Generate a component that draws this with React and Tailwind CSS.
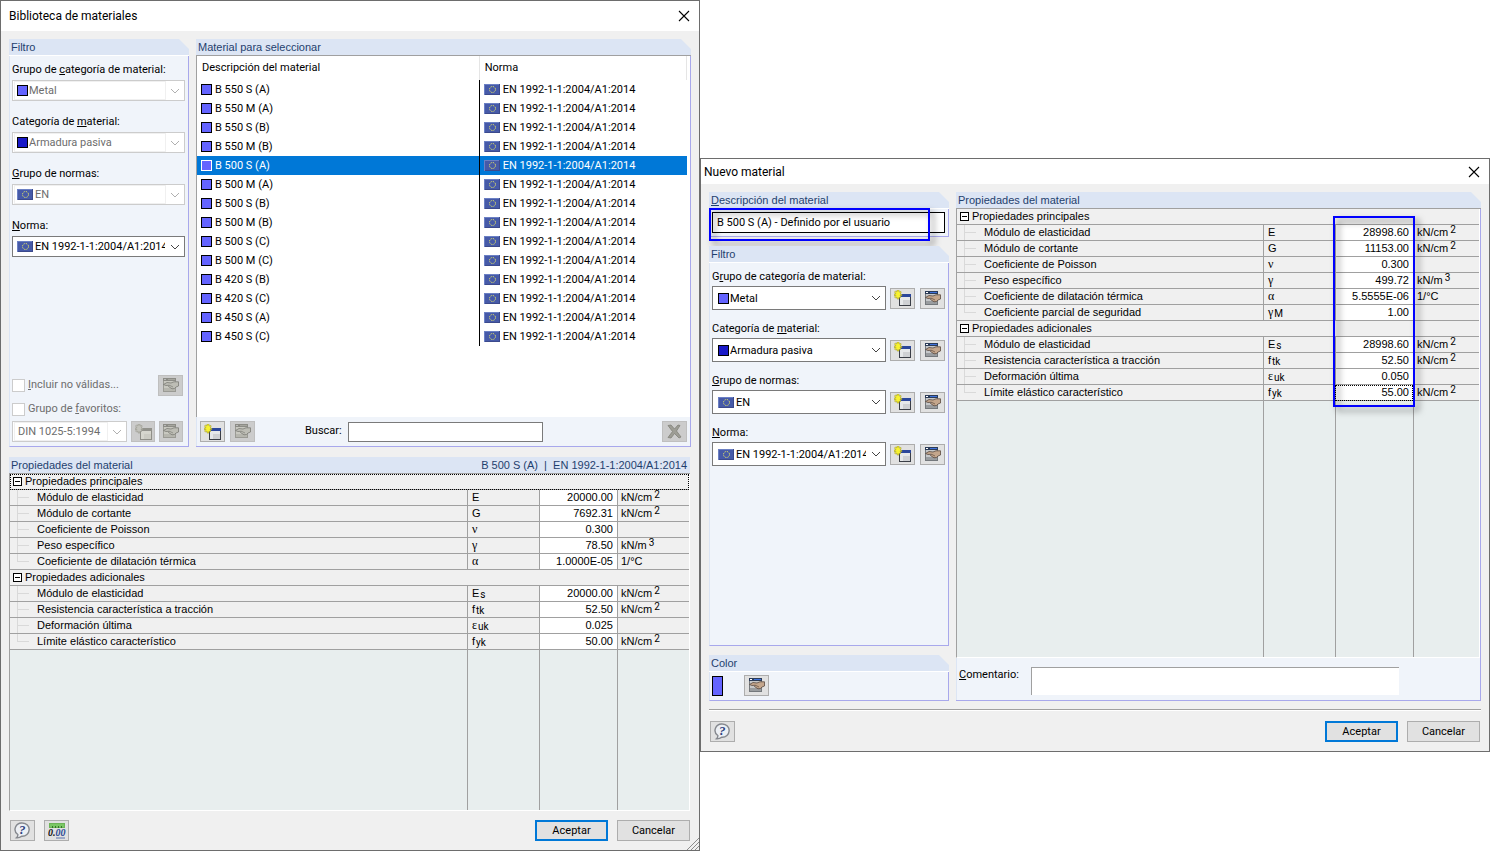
import { useId } from "react";

const uiFont = "font-[Roboto,'Noto_Sans',sans-serif]";
const gridFont = "font-['Liberation_Sans',Arial,sans-serif]";

const materials = [
  "B 550 S (A)",
  "B 550 M (A)",
  "B 550 S (B)",
  "B 550 M (B)",
  "B 500 S (A)",
  "B 500 M (A)",
  "B 500 S (B)",
  "B 500 M (B)",
  "B 500 S (C)",
  "B 500 M (C)",
  "B 420 S (B)",
  "B 420 S (C)",
  "B 450 S (A)",
  "B 450 S (C)",
];

const libraryGroups = [
  {
    title: "Propiedades principales",
    focused: true,
    rows: [
      { name: "Módulo de elasticidad", symbol: "E", value: "20000.00", unit: "kN/cm", power: "2" },
      { name: "Módulo de cortante", symbol: "G", value: "7692.31", unit: "kN/cm", power: "2" },
      { name: "Coeficiente de Poisson", symbol: "ν", greek: true, value: "0.300" },
      { name: "Peso específico", symbol: "γ", greek: true, value: "78.50", unit: "kN/m", power: "3" },
      { name: "Coeficiente de dilatación térmica", symbol: "α", greek: true, value: "1.0000E-05", unit: "1/°C" },
    ],
  },
  {
    title: "Propiedades adicionales",
    rows: [
      { name: "Módulo de elasticidad", symbol: "E", sub: "s", value: "20000.00", unit: "kN/cm", power: "2" },
      { name: "Resistencia característica a tracción", symbol: "f", sub: "tk", value: "52.50", unit: "kN/cm", power: "2" },
      { name: "Deformación última", symbol: "ε", greek: true, sub: "uk", value: "0.025" },
      { name: "Límite elástico característico", symbol: "f", sub: "yk", value: "50.00", unit: "kN/cm", power: "2" },
    ],
  },
];

const newMaterialGroups = [
  {
    title: "Propiedades principales",
    rows: [
      { name: "Módulo de elasticidad", symbol: "E", value: "28998.60", unit: "kN/cm", power: "2" },
      { name: "Módulo de cortante", symbol: "G", value: "11153.00", unit: "kN/cm", power: "2" },
      { name: "Coeficiente de Poisson", symbol: "ν", greek: true, value: "0.300" },
      { name: "Peso específico", symbol: "γ", greek: true, value: "499.72", unit: "kN/m", power: "3" },
      { name: "Coeficiente de dilatación térmica", symbol: "α", greek: true, value: "5.5555E-06", unit: "1/°C" },
      { name: "Coeficiente parcial de seguridad", symbol: "γ", greek: true, sub: "M", value: "1.00" },
    ],
  },
  {
    title: "Propiedades adicionales",
    rows: [
      { name: "Módulo de elasticidad", symbol: "E", sub: "s", value: "28998.60", unit: "kN/cm", power: "2" },
      { name: "Resistencia característica a tracción", symbol: "f", sub: "tk", value: "52.50", unit: "kN/cm", power: "2" },
      { name: "Deformación última", symbol: "ε", greek: true, sub: "uk", value: "0.050" },
      { name: "Límite elástico característico", symbol: "f", sub: "yk", value: "55.00", unit: "kN/cm", power: "2", focused: true },
    ],
  },
];

const CloseIcon = () => (
  <svg width="12" height="12" viewBox="0 0 12 12" fill="none" stroke="#000" strokeWidth="1.1">
    <path d="M1 1L11 11M11 1L1 11" />
  </svg>
);

const NewIcon = ({ disabled }) => (
  <svg width="17" height="16" viewBox="0 0 17 16">
    <rect x="5" y="4" width="12" height="12" fill={disabled ? "#8f8f88" : "#3a3e46"} />
    <rect x="5" y="4" width="12" height="3" fill={disabled ? "#92928c" : "#2b479b"} />
    <rect x="6" y="7" width="10" height="8" fill={disabled ? "#d6d6ce" : "#e6e8ea"} />
    <rect x="9" y="10" width="7" height="5" fill={disabled ? "#cbcbc3" : "#cfd1d4"} />
    <path
      d="M3 0H5V2L7 1.500L7 3L6 4L8 4.500V5.500L6 5.500L7 7L6 8L5 7V9H3V7L1.500 8L0.500 7L2 5.500H0V4H2L0.500 2L1.500 1L3 2Z"
      fill={disabled ? "#c2c2bb" : "#f7f230"}
      stroke={disabled ? "#98988f" : "#a39a30"}
      strokeWidth="0.600"
    />
  </svg>
);

const EditIcon = ({ disabled }) => (
  <svg width="16" height="15" viewBox="0 0 16 15">
    <rect x="0.500" y="0.500" width="12" height="13" fill={disabled ? "#c8c8c0" : "#c6c8ca"} stroke={disabled ? "#9a9a94" : "#74787c"} />
    <rect x="0" y="0" width="13" height="3" fill={disabled ? "#8c8c86" : "#2c3c58"} />
    <rect x="1" y="1" width="2" height="1" fill={disabled ? "#bbb" : "#fff"} />
    <rect x="5" y="1" width="7" height="1" fill={disabled ? "#a6a69f" : "#3f72dc"} />
    <rect x="1" y="10" width="11" height="3" fill={disabled ? "#b6b6ae" : "#999c9f"} />
    <path
      d="M0.500 6.500L4 4.500L8 5L11 3.800H15.500V8L13 9L11.500 10.500L9 10.800L5.500 8.500L6.500 7.200L3 7.500Z"
      fill={disabled ? "#bdbdb5" : "#c4a68c"}
      stroke={disabled ? "#7c7c76" : "#5a4a40"}
      strokeWidth="0.800"
    />
    <path d="M7 7.500L10 9" stroke={disabled ? "#85857e" : "#6b5546"} strokeWidth="0.800" />
  </svg>
);

const DeleteIcon = () => (
  <svg width="15" height="15" viewBox="0 0 15 15">
    <path
      d="M1 1.500L4 1L7.500 5L11 1L13 1.500L9.500 7L14 13L12 14L7.500 9.500L4 14L1 13.500L5.500 7.500Z"
      fill="#9d9d95"
      stroke="#82827a"
      strokeWidth="0.800"
    />
  </svg>
);

const HelpIcon = () => (
  <svg width="17" height="17" viewBox="0 0 17 17">
    <path
      d="M8.500 1A6.700 6.400 0 1 1 8 14.200C6 15.500 4.500 16 2.500 15.800C3.500 15 4 14 3.800 12.500A6.700 6.400 0 0 1 8.500 1Z"
      fill="#eceff4"
      stroke="#85888e"
      strokeWidth="1.400"
    />
    <text x="5" y="12" fontSize="13" fontWeight="bold" fontStyle="italic" fontFamily="Liberation Serif, serif" fill="#2a407c">
      ?
    </text>
  </svg>
);

const UnitsIcon = () => (
  <svg width="18" height="18" viewBox="0 0 18 18">
    <rect x="1.500" y="1.500" width="15" height="4" fill="#7bc765" stroke="#6cb457" />
    <path d="M4.500 4V6M7.500 4V6M10.500 4V6M13.500 4V6" stroke="#347428" />
    <text x="0" y="14" fontSize="10" fontWeight="bold" fontStyle="italic" fontFamily="Liberation Serif, serif" fill="#111">
      0.
      <tspan fill="#2b4a94">00</tspan>
    </text>
    <path d="M8 16H17" stroke="#5a74ad" />
  </svg>
);

const Flag = () => (
  <svg className="mr-px shrink-0" width="16" height="11" viewBox="0 0 16 11">
    <rect width="16" height="11" fill="#465aa8" />
    <path d="M0 0H16V1H1V11H0Z" fill="#6b80c4" />
    <path d="M16 0V11H1V10H15V0Z" fill="#3c4a8c" />
    <circle cx="8.500" cy="5.500" r="3" fill="none" stroke="#f0f060" strokeDasharray="1.200 1.156" />
  </svg>
);

const Swatch = ({ color, selected }) => (
  <span
    className={`size-[11px] shrink-0 border ${selected ? "border-white" : "border-black"} ${
      color === "dark" ? "bg-[#1919c8]" : "bg-[#6464ff]"
    }`}
  />
);

const WindowTitle = ({ children, height }) => (
  <header className={`flex items-center justify-between bg-white pr-[9px] ${height}`}>
    <h1 className="text-[12px] leading-4 text-black">{children}</h1>
    <button type="button" aria-label="Cerrar" className="flex">
      <CloseIcon />
    </button>
  </header>
);

const PanelHeader = ({ children, cut = true, line = "border-white" }) => (
  <h2
    className={`flex h-[17px] shrink-0 items-center justify-between border-b bg-[#dce5f4] pr-[3px] pl-0.5 text-[11px] text-[#1f3f6e] ${gridFont} ${line} ${
      cut ? "[clip-path:polygon(0_0,calc(100%-10px)_0,100%_10px,100%_100%,0_100%)]" : ""
    }`}
  >
    {children}
  </h2>
);

const Panel = ({ title, line, flush, className = "", children }) => (
  <section className={`flex flex-col ${className}`}>
    <PanelHeader line={line}>{title}</PanelHeader>
    <div
      className={`flex grow flex-col border-r border-b border-r-[#a8a8ec] border-b-[#a8a8ec] bg-[#f0f4fa] ${
        flush ? "" : "border-l border-l-[#dce5f4]"
      }`}
    >
      {children}
    </div>
  </section>
);

const IconButton = ({ label, disabled, width = "w-[25px]", children }) => (
  <button
    type="button"
    aria-label={label}
    disabled={disabled}
    className={`flex h-[21px] shrink-0 items-center justify-center border ${width} ${
      disabled ? "border-[#bfbfbf] bg-[#cccccc]" : "border-[#adadad] bg-[#e1e1e1]"
    }`}
  >
    {children}
  </button>
);

const Select = ({ id, label, icon, value, disabled, large }) => (
  <div
    className={`flex min-w-0 grow items-center border bg-white pl-px ${large ? "h-6" : "h-[21px]"} ${
      disabled ? "border-[#cccccc]" : "border-[#7a7a7a]"
    }`}
  >
    <div
      className={`flex min-w-0 grow items-center border py-px pl-0.5 ${disabled ? "border-[#f0f0f0]" : "border-white"} ${
        large ? "ml-px" : ""
      }`}
    >
      {icon}
      <select
        id={id}
        aria-label={label}
        disabled={disabled}
        className="h-[15px] w-0 min-w-0 grow appearance-none bg-transparent pl-px text-[11px] leading-[15px] text-black disabled:text-[#6d6d6d] disabled:opacity-100"
      >
        <option>{value}</option>
      </select>
    </div>
    <svg className="mx-1 shrink-0" width="10" height="6" viewBox="0 0 10 6" fill="none" stroke={disabled ? "#b0b0b0" : "#444"}>
      <path d="M1 1L5 5L9 1" />
    </svg>
  </div>
);

const Field = ({ before = "", mnemonic, after, icon, value, disabled, large }) => {
  const id = useId();
  return (
    <div className="flex flex-col">
      <label htmlFor={id} className={`text-[11px] leading-[18px] ${large ? "h-[18px]" : "h-[19px]"}`}>
        {before}
        <u>{mnemonic}</u>
        {after}
      </label>
      <div className="flex items-center">
        <Select id={id} icon={icon} value={value} disabled={disabled} large={large} />
        {large && (
          <div className="ml-1 flex gap-[5px]">
            <IconButton label="Nuevo"><NewIcon /></IconButton>
            <IconButton label="Editar"><EditIcon /></IconButton>
          </div>
        )}
      </div>
    </div>
  );
};

const TreeBranch = ({ last }) => (
  <span className="ml-[7px] flex w-3 shrink-0 flex-col">
    <span className="h-2 border-b border-l border-[#d9d9d9]" />
    <span className={`h-[7px] ${last ? "" : "border-l border-[#d9d9d9]"}`} />
  </span>
);

const cell = "h-4 border-b border-[#a0a0a0] p-0 leading-[15px] whitespace-nowrap";

const PropertyTable = ({ groups, label, unitColumn, fillerColumns }) => (
  <div className={`flex grow flex-col border-r border-b border-l border-r-white border-b-white border-l-[#a0a0a0] bg-[#e8eeee] text-[11px] ${gridFont}`}>
    <table aria-label={label} className="w-full table-fixed border-separate border-spacing-0 bg-[#f0f0f0] text-black">
      <colgroup>
        <col />
        <col className="w-[72px]" />
        <col className="w-[78px]" />
        <col className={unitColumn} />
      </colgroup>
      {groups.map((group) => (
        <tbody key={group.title}>
          <tr>
            <th
              colSpan={4}
              className={`${cell} text-left font-normal ${
                group.focused ? "outline-1 -outline-offset-1 outline-black outline-dotted" : ""
              }`}
            >
              <div className="flex h-[15px] items-center gap-[3px] pl-[3px]">
                <button
                  type="button"
                  aria-label={`Contraer ${group.title}`}
                  className="flex size-[9px] items-center justify-center border border-black bg-white"
                >
                  <span className="h-px w-[5px] bg-black" />
                </button>
                {group.title}
              </div>
            </th>
          </tr>
          {group.rows.map((row, index) => (
            <tr key={row.name}>
              <td className={cell}>
                <div className="flex h-[15px] gap-2">
                  <TreeBranch last={index === group.rows.length - 1} />
                  {row.name}
                </div>
              </td>
              <td className={`${cell} border-l pl-1`}>
                <span className={row.greek ? "font-['Liberation_Serif',serif] text-[12px]" : ""}>{row.symbol}</span>
                {row.sub && <sub className={`-bottom-px ml-px text-[10px] ${uiFont}`}>{row.sub}</sub>}
              </td>
              <td
                className={`${cell} border-l bg-white pr-1 text-right ${
                  row.focused ? "outline-1 -outline-offset-1 outline-black outline-dotted" : ""
                }`}
              >
                {row.value}
              </td>
              <td className={`${cell} border-l pl-[3px]`}>
                {row.unit}
                {row.power && <sup className={`-top-[3px] ml-0.5 text-[10px] ${uiFont}`}>{row.power}</sup>}
              </td>
            </tr>
          ))}
        </tbody>
      ))}
    </table>
    <div className={`grid grow ${fillerColumns}`}>
      <span />
      <span className="border-l border-[#a0a0a0]" />
      <span className="border-l border-[#a0a0a0]" />
      <span className="border-l border-[#a0a0a0]" />
    </div>
  </div>
);

const DialogButtons = () => (
  <div className="ml-auto flex gap-[9px]">
    <button type="button" className="h-[21px] w-[73px] border-2 border-[#0078d7] bg-[#e1e1e1] text-[11px] leading-4">
      Aceptar
    </button>
    <button type="button" className="h-[21px] w-[73px] border border-[#adadad] bg-[#e1e1e1] text-[11px] leading-4">
      Cancelar
    </button>
  </div>
);

const FilterPanel = () => (
  <Panel title="Filtro" className="w-[180px] shrink-0">
    <div className="flex grow flex-col pt-[5px] pr-[3px] pb-1 pl-0.5">
      <div className="flex flex-col gap-3">
        <Field before="Grupo de " mnemonic="c" after="ategoría de material:" icon={<Swatch />} value="Metal" disabled />
        <Field before="Categoría de " mnemonic="m" after="aterial:" icon={<Swatch color="dark" />} value="Armadura pasiva" disabled />
        <Field mnemonic="G" after="rupo de normas:" icon={<Flag />} value="EN" disabled />
        <Field mnemonic="N" after="orma:" icon={<Flag />} value="EN 1992-1-1:2004/A1:2014" />
      </div>
      <div className="mt-auto flex items-center pr-0.5 text-[11px] text-[#6d6d6d]">
        <label className="flex grow items-center gap-[3px]">
          <input type="checkbox" disabled className="size-[13px] appearance-none border border-[#cccccc] bg-white" />
          <span><u>I</u>ncluir no válidas...</span>
        </label>
        <IconButton label="Editar no válidas" disabled><EditIcon disabled /></IconButton>
      </div>
      <label className="mt-1 flex h-[18px] items-center gap-[3px] text-[11px] text-[#6d6d6d]">
        <input type="checkbox" disabled className="size-[13px] appearance-none border border-[#cccccc] bg-white" />
        <span>Grupo de <u>f</u>avoritos:</span>
      </label>
      <div className="mt-[3px] flex items-center gap-1 pr-0.5">
        <Select label="Grupo de favoritos" value="DIN 1025-5:1994" disabled />
        <IconButton label="Nuevo grupo" disabled width="w-6"><NewIcon disabled /></IconButton>
        <IconButton label="Editar grupo" disabled width="w-6"><EditIcon disabled /></IconButton>
      </div>
    </div>
  </Panel>
);

const MaterialPanel = () => (
  <Panel title="Material para seleccionar" line="border-[#a0a0a0]" flush className="min-w-0 grow">
    <div className="grow border-l border-[#a0a0a0] bg-white pr-[3px]">
      <table className="w-full table-fixed border-separate border-spacing-0 text-[11px]">
        <colgroup>
          <col className="w-[57.7%]" />
          <col />
        </colgroup>
        <thead>
          <tr className="h-6 text-left">
            <th className="border-r border-[#e5e5e5] p-0 pl-[5px] font-normal">Descripción del material</th>
            <th className="border-r border-[#e5e5e5] p-0 pl-[5px] font-normal">Norma</th>
          </tr>
        </thead>
        <tbody>
          {materials.map((name) => {
            const selected = name === "B 500 S (A)";
            return (
              <tr key={name} className={selected ? "bg-[#0078d7] text-white" : "text-black"}>
                <td className="h-[19px] border-r border-black p-0 pl-1">
                  <div className="flex items-center gap-[3px] leading-[17px]">
                    <Swatch selected={selected} />
                    {name}
                  </div>
                </td>
                <td className="h-[19px] p-0 pl-1">
                  <div className="flex items-center gap-0.5 leading-[17px]">
                    <Flag />
                    EN 1992-1-1:2004/A1:2014
                  </div>
                </td>
              </tr>
            );
          })}
        </tbody>
      </table>
    </div>
    <div className="flex h-[29px] items-center gap-[5px] border-l border-[#dce5f4] px-[3px]">
      <IconButton label="Nuevo material"><NewIcon /></IconButton>
      <IconButton label="Editar material" disabled><EditIcon disabled /></IconButton>
      <label className="ml-[45px] flex items-center text-[11px]">
        <span className="w-[43px]">Buscar:</span>
        <input type="text" className="h-5 w-[195px] border border-[#7a7a7a] bg-white px-1" />
      </label>
      <div className="ml-auto">
        <IconButton label="Eliminar" disabled><DeleteIcon /></IconButton>
      </div>
    </div>
  </Panel>
);

const MaterialLibrary = () => (
  <section className="relative flex min-h-screen flex-col border border-[#6d6d6d] bg-[#f0f0f0]">
    <WindowTitle height="h-[30px] pl-2">Biblioteca de materiales</WindowTitle>
    <div className="flex h-[424px] shrink-0 gap-[7px] px-2 pt-2 pb-2">
      <FilterPanel />
      <MaterialPanel />
    </div>
    <div className="mt-0.5 mr-[9px] ml-2 flex grow flex-col">
      <PanelHeader cut={false} line="border-[#a0a0a0]">
        <span>Propiedades del material</span>
        <span>B 500 S (A)&nbsp; |&nbsp; EN 1992-1-1:2004/A1:2014</span>
      </PanelHeader>
      <PropertyTable
        groups={libraryGroups}
        label="Propiedades del material"
        unitColumn="w-[72px]"
        fillerColumns="grid-cols-[1fr_72px_78px_72px]"
      />
    </div>
    <footer className="flex gap-[9px] px-[9px] pt-[9px] pb-[9px]">
      <IconButton label="Ayuda"><HelpIcon /></IconButton>
      <IconButton label="Unidades y decimales"><UnitsIcon /></IconButton>
      <DialogButtons />
    </footer>
    <svg className="absolute right-0 bottom-0" width="12" height="12" viewBox="0 0 12 12" stroke="#8c8c8c">
      <path d="M0 12L12 0M4 12L12 4M8 12L12 8" />
    </svg>
  </section>
);

const NewMaterial = () => {
  const descriptionId = useId();
  return (
    <section className="mt-[158px] flex flex-col self-start border border-[#6d6d6d] bg-[#f0f0f0]">
      <WindowTitle height="h-[25px] pl-[3px]">Nuevo material</WindowTitle>
      <div className="flex gap-[7px] px-2 pt-2">
        <div className="flex w-[240px] shrink-0 flex-col gap-[9px]">
          <Panel title={<label htmlFor={descriptionId}><u>D</u>escripción del material</label>}>
            <div className="relative px-0.5 py-[3px] pr-[3px]">
              <input
                id={descriptionId}
                type="text"
                defaultValue="B 500 S (A) - Definido por el usuario"
                className="block h-[21px] w-full border border-black bg-white px-1 text-[11px]"
              />
              <span className="pointer-events-none absolute -top-px right-[18px] -bottom-[5px] -left-px border-2 border-[#0000ff] drop-shadow-[4px_4px_3px_rgba(0,0,0,0.5)]" />
            </div>
          </Panel>
          <Panel title="Filtro" className="h-[400px]">
            <div className="flex flex-col gap-[10px] pt-[5px] pr-[3px] pl-0.5">
              <Field before="G" mnemonic="r" after="upo de categoría de material:" icon={<Swatch />} value="Metal" large />
              <Field before="Categoría de " mnemonic="m" after="aterial:" icon={<Swatch color="dark" />} value="Armadura pasiva" large />
              <Field mnemonic="G" after="rupo de normas:" icon={<Flag />} value="EN" large />
              <Field mnemonic="N" after="orma:" icon={<Flag />} value="EN 1992-1-1:2004/A1:2014" large />
            </div>
          </Panel>
          <Panel title="Color">
            <div className="flex items-center gap-[21px] px-0.5 pt-[3px] pb-1">
              <span className="h-5 w-[11px] border border-black bg-[#6464ff]" />
              <IconButton label="Editar color"><EditIcon /></IconButton>
            </div>
          </Panel>
        </div>
        <Panel title="Propiedades del material" line="border-[#a0a0a0]" flush className="min-w-0 grow">
          <div className="relative flex grow flex-col">
            <PropertyTable
              groups={newMaterialGroups}
              label="Propiedades del material nuevo"
              unitColumn="w-[66px]"
              fillerColumns="grid-cols-[1fr_72px_78px_66px]"
            />
            <span className="pointer-events-none absolute top-[7px] right-[65px] h-[191px] w-[82px] border-2 border-[#0000ff] drop-shadow-[4px_4px_3px_rgba(0,0,0,0.5)]" />
          </div>
          <label className="flex gap-3 border-l border-[#dce5f4] pt-[9px] pr-[81px] pb-[5px] pl-0.5 text-[11px]">
            <span className="w-[60px] leading-4"><u>C</u>omentario:</span>
            <textarea rows={1} className="h-7 grow resize-none border-t border-l border-[#a0a0a0] bg-white px-1" />
          </label>
        </Panel>
      </div>
      <hr className="mx-2 mt-2 border-t border-b border-t-[#a0a0a0] border-b-white" />
      <footer className="flex items-center px-[9px] pt-[10px] pb-[9px]">
        <IconButton label="Ayuda"><HelpIcon /></IconButton>
        <DialogButtons />
      </footer>
    </section>
  );
};

export default function App() {
  return (
    <main className={`grid min-h-screen grid-cols-[700fr_790fr] bg-white text-black ${uiFont}`}>
      <MaterialLibrary />
      <NewMaterial />
    </main>
  );
}
